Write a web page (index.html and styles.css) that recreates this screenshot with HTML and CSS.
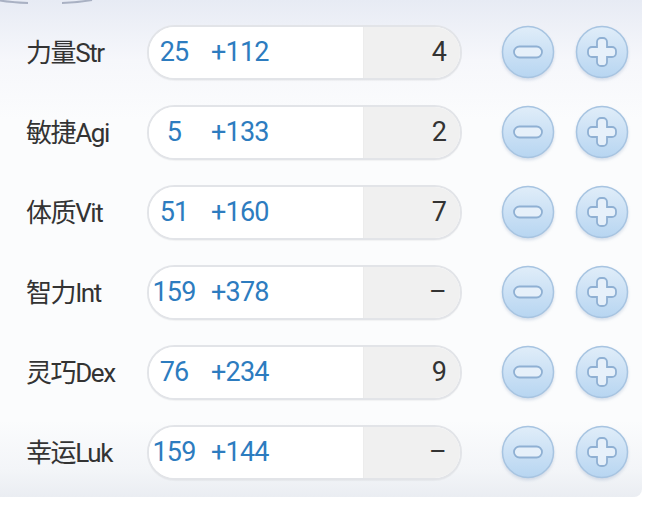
FILE: index.html
```html
<!DOCTYPE html>
<html lang="zh">
<head>
<meta charset="utf-8">
<link rel="stylesheet" href="styles.css">
</head>
<body>
<div class="panel">
  <svg class="deco" width="100" height="6" viewBox="0 0 100 6"><path d="M0,0.5 Q12,2.5 28,3 M62,3 Q78,2.5 92,0" fill="none" stroke="#5d6a88" stroke-width="2" stroke-opacity="0.45"/></svg>
  <div class="row">
    <div class="label">力量Str</div>
    <div class="pill"><div class="main"><span class="base">25</span><span class="bonus">+112</span></div><div class="cost">4</div></div>
    <div class="btns">
      <svg class="btn" viewBox="0 0 54 54"><defs><linearGradient id="g" x1="0" y1="0" x2="0" y2="1"><stop offset="0" stop-color="#e0edf9"/><stop offset="1" stop-color="#b7d5f1"/></linearGradient></defs><circle cx="27" cy="27" r="25.5" fill="url(#g)" stroke="#a7c4e1" stroke-width="1.5"/><rect x="13" y="21.5" width="28" height="11" rx="5.5" fill="#e6f0fa" stroke="#8fb0d3" stroke-width="1.8"/></svg>
      <svg class="btn" viewBox="0 0 54 54"><circle cx="27" cy="27" r="25.5" fill="url(#g)" stroke="#a7c4e1" stroke-width="1.5"/><path d="M22,17 a4,4 0 0 1 4,-4 h2 a4,4 0 0 1 4,4 v5 h5 a4,4 0 0 1 4,4 v2 a4,4 0 0 1 -4,4 h-5 v5 a4,4 0 0 1 -4,4 h-2 a4,4 0 0 1 -4,-4 v-5 h-5 a4,4 0 0 1 -4,-4 v-2 a4,4 0 0 1 4,-4 h5 z" fill="#e6f0fa" stroke="#8fb0d3" stroke-width="1.8"/></svg>
    </div>
  </div>
  <div class="row">
    <div class="label">敏捷Agi</div>
    <div class="pill"><div class="main"><span class="base">5</span><span class="bonus">+133</span></div><div class="cost">2</div></div>
    <div class="btns">
      <svg class="btn" viewBox="0 0 54 54"><circle cx="27" cy="27" r="25.5" fill="url(#g)" stroke="#a7c4e1" stroke-width="1.5"/><rect x="13" y="21.5" width="28" height="11" rx="5.5" fill="#e6f0fa" stroke="#8fb0d3" stroke-width="1.8"/></svg>
      <svg class="btn" viewBox="0 0 54 54"><circle cx="27" cy="27" r="25.5" fill="url(#g)" stroke="#a7c4e1" stroke-width="1.5"/><path d="M22,17 a4,4 0 0 1 4,-4 h2 a4,4 0 0 1 4,4 v5 h5 a4,4 0 0 1 4,4 v2 a4,4 0 0 1 -4,4 h-5 v5 a4,4 0 0 1 -4,4 h-2 a4,4 0 0 1 -4,-4 v-5 h-5 a4,4 0 0 1 -4,-4 v-2 a4,4 0 0 1 4,-4 h5 z" fill="#e6f0fa" stroke="#8fb0d3" stroke-width="1.8"/></svg>
    </div>
  </div>
  <div class="row">
    <div class="label">体质Vit</div>
    <div class="pill"><div class="main"><span class="base">51</span><span class="bonus">+160</span></div><div class="cost">7</div></div>
    <div class="btns">
      <svg class="btn" viewBox="0 0 54 54"><circle cx="27" cy="27" r="25.5" fill="url(#g)" stroke="#a7c4e1" stroke-width="1.5"/><rect x="13" y="21.5" width="28" height="11" rx="5.5" fill="#e6f0fa" stroke="#8fb0d3" stroke-width="1.8"/></svg>
      <svg class="btn" viewBox="0 0 54 54"><circle cx="27" cy="27" r="25.5" fill="url(#g)" stroke="#a7c4e1" stroke-width="1.5"/><path d="M22,17 a4,4 0 0 1 4,-4 h2 a4,4 0 0 1 4,4 v5 h5 a4,4 0 0 1 4,4 v2 a4,4 0 0 1 -4,4 h-5 v5 a4,4 0 0 1 -4,4 h-2 a4,4 0 0 1 -4,-4 v-5 h-5 a4,4 0 0 1 -4,-4 v-2 a4,4 0 0 1 4,-4 h5 z" fill="#e6f0fa" stroke="#8fb0d3" stroke-width="1.8"/></svg>
    </div>
  </div>
  <div class="row">
    <div class="label">智力Int</div>
    <div class="pill"><div class="main"><span class="base">159</span><span class="bonus">+378</span></div><div class="cost">–</div></div>
    <div class="btns">
      <svg class="btn" viewBox="0 0 54 54"><circle cx="27" cy="27" r="25.5" fill="url(#g)" stroke="#a7c4e1" stroke-width="1.5"/><rect x="13" y="21.5" width="28" height="11" rx="5.5" fill="#e6f0fa" stroke="#8fb0d3" stroke-width="1.8"/></svg>
      <svg class="btn" viewBox="0 0 54 54"><circle cx="27" cy="27" r="25.5" fill="url(#g)" stroke="#a7c4e1" stroke-width="1.5"/><path d="M22,17 a4,4 0 0 1 4,-4 h2 a4,4 0 0 1 4,4 v5 h5 a4,4 0 0 1 4,4 v2 a4,4 0 0 1 -4,4 h-5 v5 a4,4 0 0 1 -4,4 h-2 a4,4 0 0 1 -4,-4 v-5 h-5 a4,4 0 0 1 -4,-4 v-2 a4,4 0 0 1 4,-4 h5 z" fill="#e6f0fa" stroke="#8fb0d3" stroke-width="1.8"/></svg>
    </div>
  </div>
  <div class="row">
    <div class="label">灵巧Dex</div>
    <div class="pill"><div class="main"><span class="base">76</span><span class="bonus">+234</span></div><div class="cost">9</div></div>
    <div class="btns">
      <svg class="btn" viewBox="0 0 54 54"><circle cx="27" cy="27" r="25.5" fill="url(#g)" stroke="#a7c4e1" stroke-width="1.5"/><rect x="13" y="21.5" width="28" height="11" rx="5.5" fill="#e6f0fa" stroke="#8fb0d3" stroke-width="1.8"/></svg>
      <svg class="btn" viewBox="0 0 54 54"><circle cx="27" cy="27" r="25.5" fill="url(#g)" stroke="#a7c4e1" stroke-width="1.5"/><path d="M22,17 a4,4 0 0 1 4,-4 h2 a4,4 0 0 1 4,4 v5 h5 a4,4 0 0 1 4,4 v2 a4,4 0 0 1 -4,4 h-5 v5 a4,4 0 0 1 -4,4 h-2 a4,4 0 0 1 -4,-4 v-5 h-5 a4,4 0 0 1 -4,-4 v-2 a4,4 0 0 1 4,-4 h5 z" fill="#e6f0fa" stroke="#8fb0d3" stroke-width="1.8"/></svg>
    </div>
  </div>
  <div class="row">
    <div class="label">幸运Luk</div>
    <div class="pill"><div class="main"><span class="base">159</span><span class="bonus">+144</span></div><div class="cost">–</div></div>
    <div class="btns">
      <svg class="btn" viewBox="0 0 54 54"><circle cx="27" cy="27" r="25.5" fill="url(#g)" stroke="#a7c4e1" stroke-width="1.5"/><rect x="13" y="21.5" width="28" height="11" rx="5.5" fill="#e6f0fa" stroke="#8fb0d3" stroke-width="1.8"/></svg>
      <svg class="btn" viewBox="0 0 54 54"><circle cx="27" cy="27" r="25.5" fill="url(#g)" stroke="#a7c4e1" stroke-width="1.5"/><path d="M22,17 a4,4 0 0 1 4,-4 h2 a4,4 0 0 1 4,4 v5 h5 a4,4 0 0 1 4,4 v2 a4,4 0 0 1 -4,4 h-5 v5 a4,4 0 0 1 -4,4 h-2 a4,4 0 0 1 -4,-4 v-5 h-5 a4,4 0 0 1 -4,-4 v-2 a4,4 0 0 1 4,-4 h5 z" fill="#e6f0fa" stroke="#8fb0d3" stroke-width="1.8"/></svg>
    </div>
  </div>
</div>
</body>
</html>
```

FILE: styles.css
```css
html, body {
  margin: 0;
  padding: 0;
  background: #ffffff;
}
body {
  width: 646px;
  height: 509px;
  overflow: hidden;
  font-family: Roboto, "Noto Sans CJK SC", sans-serif;
}
.panel {
  position: relative;
  width: 642px;
  height: 497px;
  box-sizing: border-box;
  padding-top: 12px;
  border-radius: 0 0 8px 0;
  background: linear-gradient(to bottom, #e7ebf4 0px, #f6f7fb 60px, #fbfcfd 120px, #fbfcfd 420px, #f3f5f8 470px, #eaedf2 497px);
}
.deco {
  position: absolute;
  left: 0;
  top: 0;
}
.row {
  display: flex;
  align-items: center;
  height: 80px;
}
.label {
  flex: 0 0 147px;
  width: 147px;
  padding-left: 26px;
  padding-bottom: 3px;
  box-sizing: border-box;
  white-space: nowrap;
  font-size: 26px;
  color: #333333;
  letter-spacing: -1.4px;
}
.pill {
  flex: 0 0 315px;
  display: flex;
  width: 315px;
  height: 55px;
  box-sizing: border-box;
  border: 2px solid #e2e4e8;
  border-radius: 28px;
  overflow: hidden;
  background: #ffffff;
  box-shadow: 0 1px 1px rgba(0, 0, 0, 0.04);
  font-size: 27px;
  letter-spacing: -0.8px;
}
.main {
  flex: 1;
  display: flex;
  align-items: center;
  background: #ffffff;
  border-right: 1px solid #ececec;
}
.base {
  width: 50px;
  text-align: center;
  color: #2d7cbf;
}
.bonus {
  margin-left: 12px;
  color: #2d7cbf;
}
.cost {
  flex: 0 0 96px;
  display: flex;
  align-items: center;
  justify-content: flex-end;
  padding-right: 14px;
  box-sizing: border-box;
  background: #f0f0f0;
  color: #333333;
}
.btns {
  flex: 0 0 auto;
  display: flex;
  gap: 20px;
  margin-left: 39px;
}
.btn {
  width: 54px;
  height: 54px;
  display: block;
  filter: drop-shadow(0 2px 1.5px rgba(110, 140, 180, 0.25));
}
```
